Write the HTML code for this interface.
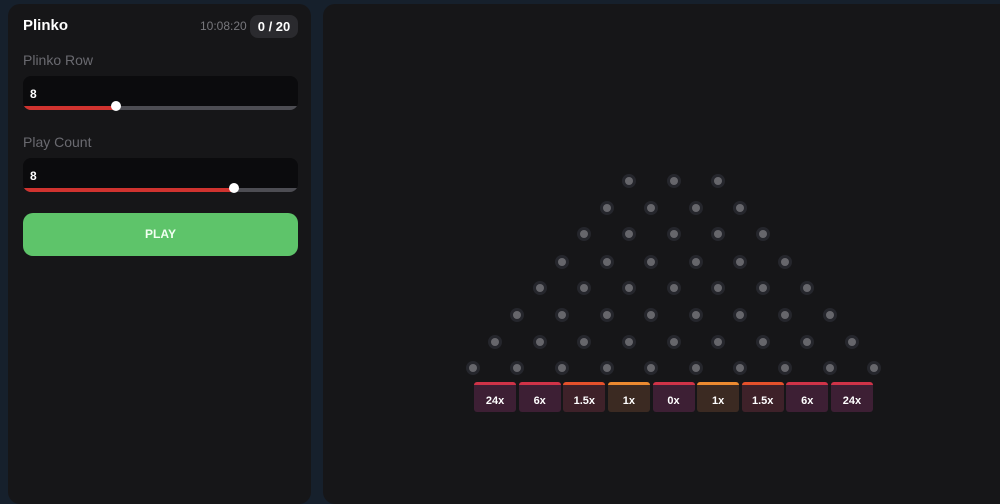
<!DOCTYPE html><html><head><style>
body{margin:0;width:1000px;height:492px;background:#16202c;font-family:"Liberation Sans",sans-serif;overflow:hidden;position:relative}
.p{position:absolute;background:#161618;border-radius:12px}
.t{position:absolute;color:#fff;font-weight:bold}
.box{position:absolute;left:23px;width:275px;height:34px;background:#0b0b0d;border-radius:8px;overflow:hidden}
.box span{position:absolute;left:7px;top:11px;color:#fff;font-weight:bold;font-size:12px}
.tr{position:absolute;left:0;right:0;bottom:0;height:4px;background:#4d4d53}
.fill{position:absolute;left:0;bottom:0;height:4px;background:#d0332f}
.th{position:absolute;width:10px;height:10px;border-radius:50%;background:#fff}
.lbl{position:absolute;left:23px;color:#6a6a70;font-size:14px}
.peg{position:absolute;width:14px;height:14px;border-radius:50%;background:#25262c}
.peg:after{content:"";position:absolute;left:3px;top:3px;width:8px;height:8px;border-radius:50%;background:#66666b}
.b{position:absolute;top:382px;width:42px;height:30px;border-radius:3px;color:#fff;font-weight:bold;font-size:11px;text-align:center;line-height:33px;box-sizing:border-box;border-top:3px solid}
</style></head><body>
<div class="p" style="left:8px;top:4px;width:303px;height:500px"></div>
<div class="p" style="left:323px;top:4px;width:700px;height:500px"></div>
<div class="t" style="left:23px;top:17px;font-size:15px">Plinko</div>
<div style="position:absolute;left:200px;top:19px;color:#77777c;font-size:12px">10:08:20</div>
<div style="position:absolute;left:250px;top:15px;width:48px;height:23px;border-radius:8px;background:#2a2a2e;color:#fff;font-weight:bold;font-size:13px;text-align:center;line-height:23px">0 / 20</div>
<div class="lbl" style="top:52px">Plinko Row</div>
<div class="box" style="top:76px"><span>8</span><div class="tr"></div><div class="fill" style="width:93px"></div></div>
<div class="th" style="left:111px;top:101px"></div>
<div class="lbl" style="top:134px">Play Count</div>
<div class="box" style="top:158px"><span>8</span><div class="tr"></div><div class="fill" style="width:211px"></div></div>
<div class="th" style="left:229px;top:183px"></div>
<div style="position:absolute;left:23px;top:213px;width:275px;height:43px;border-radius:10px;background:#5ec46a;color:#f2fff2;font-weight:bold;font-size:12px;text-align:center;line-height:43px">PLAY</div>
<div id="g"></div>
<script>
var h='',ys=[181,208,234,262,288,315,342,368];
for(var r=0;r<8;r++){var n=r+3;for(var i=0;i<n;i++){var x=673.5+(i-(n-1)/2)*44.6;h+='<div class="peg" style="left:'+(x-7)+'px;top:'+(ys[r]-7)+'px"></div>';}}
var L=['24x','6x','1.5x','1x','0x','1x','1.5x','6x','24x'];
var C={'24x':['#3d1f34','#cf3348'],'6x':['#3d1f34','#cf3348'],'0x':['#3d1f34','#cf3348'],'1.5x':['#3e2129','#e5512b'],'1x':['#3b2a22','#ec8a30']};
for(var i=0;i<9;i++){var x=673.5+(i-4)*44.6;h+='<div class="b" style="left:'+(x-21)+'px;background:'+C[L[i]][0]+';border-color:'+C[L[i]][1]+'">'+L[i]+'</div>';}
document.getElementById('g').innerHTML=h;
</script>
</body></html>
